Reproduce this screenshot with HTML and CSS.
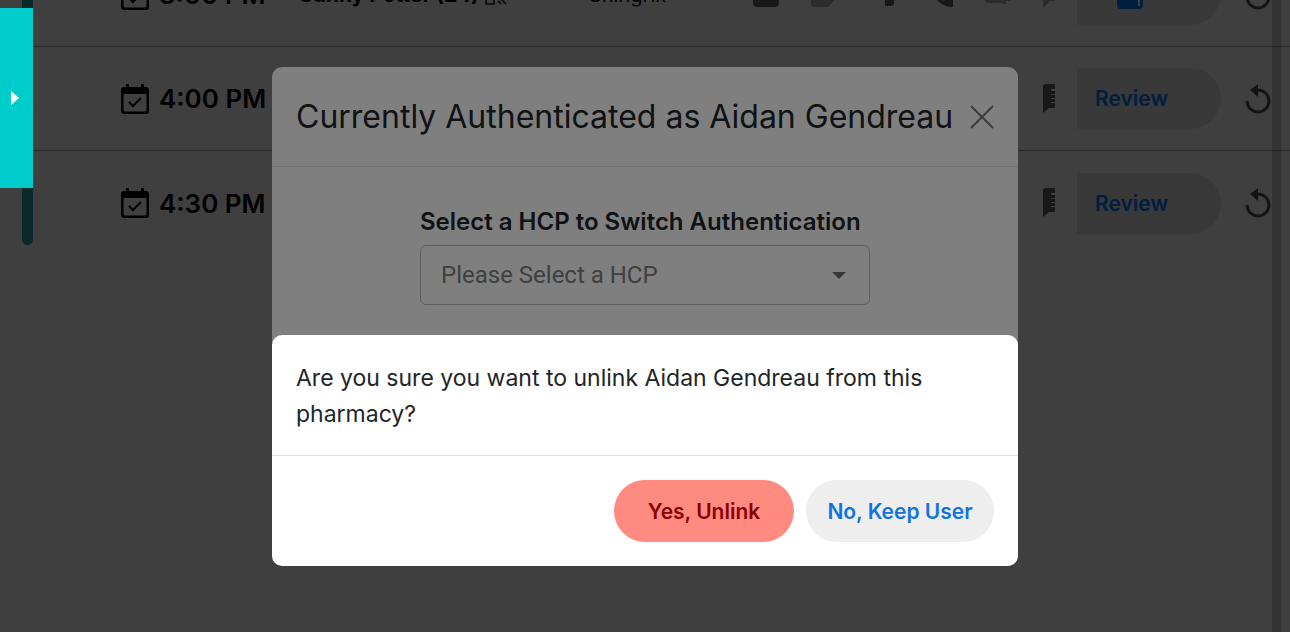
FILE: index.html
```html
<!DOCTYPE html>
<html lang="en">
  <head>
    <meta charset="UTF-8" />
    <meta name="viewport" content="width=device-width, initial-scale=1.0" />
    <title>Schedule</title>
    <link rel="stylesheet" href="styles.css" />
  </head>
  <body>
    <!-- Shared icons -->
    <svg class="sprite" aria-hidden="true">
      <symbol id="icon-calendar" viewBox="0 0 28 30">
        <path fill-rule="evenodd" d="M3 3h2V0h3v3h12V0h3v3h2a3 3 0 0 1 3 3v21a3 3 0 0 1-3 3H3a3 3 0 0 1-3-3V6a3 3 0 0 1 3-3zM2.5 10v16a1.5 1.5 0 0 0 1.5 1.5h20a1.5 1.5 0 0 0 1.5-1.5V10z" />
        <path d="M8 18l4 4 8-8" fill="none" stroke="currentColor" stroke-width="2" />
      </symbol>
      <symbol id="icon-comb" viewBox="0 0 12 30">
        <path d="M2 0h10v5H8v2h4v3H8v1h4v3H8v1h4v3H8v1h4v5H6L0 29V2z" />
      </symbol>
      <symbol id="icon-undo" viewBox="0 0 26 30">
        <path d="M2 17a11 11 0 1 0 11-11" fill="none" stroke="currentColor" stroke-width="3" />
        <path d="M13 0v13L5 6z" />
      </symbol>
    </svg>

    <!-- Schedule -->
    <main class="schedule">
      <div class="row">
        <svg class="icon-calendar"><use href="#icon-calendar" /></svg>
        <span class="time">3:00 PM</span>
        <span class="patient">Sunny Potter (24)</span>
        <svg class="icon-qr" viewBox="0 0 24 20"><path d="M1 1h8v7H1zM14 1h8v7h-8zM1 12h8v7H1zM12 10l9 9M18 10l5 5M13 16l3 3" /></svg>
        <span class="vaccine">Shingrix</span>
        <div class="row-actions">
          <div class="contact-icons">
            <svg viewBox="0 0 26 24"><rect width="26" height="24" rx="4" /></svg>
            <svg class="faded" viewBox="0 0 26 24"><path d="M2 0h24v14l-9 10H3a3 3 0 0 1-3-3V2z" /></svg>
            <svg viewBox="0 0 26 24"><path d="M16 0h9v21l-2 2h-7z" /></svg>
            <svg viewBox="0 0 26 24"><path d="M4 0h5l2 7-3 2q4 7 9 9l3-3 6 2v7h-2Q6 22 4 0z" /></svg>
            <svg class="faded" viewBox="0 0 26 24"><path d="M0 0h26v18h-5v3h-3v-1H2l-2-2z" /></svg>
          </div>
          <svg class="icon-comb faded" viewBox="0 0 12 30"><path d="M0 0h12v21H7L0 28z" /></svg>
          <button class="review-btn" aria-label="Edit">
            <svg class="icon-book" viewBox="0 0 26 28"><path d="M0 0h26v24a4 4 0 0 1-4 4H4a4 4 0 0 1-4-4z" /><path class="book-line" d="M22 6v19" /></svg>
          </button>
          <button class="undo-btn" aria-label="Undo"><svg><use href="#icon-undo" /></svg></button>
        </div>
      </div>
      <div class="row">
        <svg class="icon-calendar"><use href="#icon-calendar" /></svg>
        <span class="time">4:00 PM</span>
        <div class="row-actions">
          <svg class="icon-comb"><use href="#icon-comb" /></svg>
          <button class="review-btn">Review</button>
          <button class="undo-btn" aria-label="Undo"><svg><use href="#icon-undo" /></svg></button>
        </div>
      </div>
      <div class="row">
        <svg class="icon-calendar"><use href="#icon-calendar" /></svg>
        <span class="time">4:30 PM</span>
        <div class="row-actions">
          <svg class="icon-comb"><use href="#icon-comb" /></svg>
          <button class="review-btn">Review</button>
          <button class="undo-btn" aria-label="Undo"><svg><use href="#icon-undo" /></svg></button>
        </div>
      </div>
    </main>
    <div class="progress-bar"></div>
    <div class="scrollbar"></div>

    <!-- Authentication modal -->
    <div class="backdrop">
      <section class="modal" role="dialog" aria-labelledby="authTitle">
        <header class="modal-header">
          <h1 id="authTitle">Currently Authenticated as Aidan Gendreau</h1>
          <button class="close-btn" aria-label="Close">
            <svg viewBox="0 0 24 24"><path d="M1 1l22 22M23 1L1 23" /></svg>
          </button>
        </header>
        <div class="auth-body">
          <div class="form-group">
            <label for="hcp">Select a HCP to Switch Authentication</label>
            <select id="hcp">
              <option>Please Select a HCP</option>
            </select>
            <svg class="caret" viewBox="0 0 14 7"><path d="M0 0h14L7 7z" /></svg>
          </div>
        </div>
      </section>
    </div>

    <!-- Unlink confirmation -->
    <div class="backdrop confirm-backdrop">
      <section class="modal" role="alertdialog" aria-labelledby="confirmText">
        <p class="confirm-text" id="confirmText">
          Are you sure you want to unlink Aidan Gendreau from this pharmacy?
        </p>
        <footer class="modal-footer">
          <button class="btn btn-danger">Yes, Unlink</button>
          <button class="btn btn-light">No, Keep User</button>
        </footer>
      </section>
    </div>

    <button class="drawer-toggle" aria-label="Open drawer">
      <svg viewBox="0 0 8 14"><path d="M0 0l8 7-8 7z" /></svg>
    </button>
  </body>
</html>
```
FILE: styles.css
```css
* {
  box-sizing: border-box;
}
body {
  margin: 0;
  min-height: 100vh;
  overflow: hidden;
  background-color: white;
  color: #212529;
  font-family: Inter, "Liberation Sans", sans-serif;
}
button {
  border: none;
  padding: 0;
  font-family: inherit;
  cursor: pointer;
}
svg {
  display: block;
  flex-shrink: 0;
  fill: currentColor;
}
.sprite {
  position: absolute;
  width: 0;
  height: 0;
}

/* Schedule */
.schedule {
  margin-top: -57px;
  color: black;
}
.row {
  display: flex;
  align-items: center;
  height: 104px;
  padding-left: 121px;
  border-bottom: 1px solid #a8a8a8;
}
.row:last-child {
  border-bottom: none;
}
.icon-calendar {
  width: 28px;
  height: 30px;
  margin-right: 10px;
}
.time {
  width: 140px;
  font-size: 26px;
  font-weight: 600;
}
.patient {
  font-size: 21px;
  font-weight: 700;
}
.icon-qr {
  width: 24px;
  height: 20px;
  margin: 0 80px 0 6px;
  fill: none;
  stroke: #555;
  stroke-width: 2;
}
.vaccine {
  font-size: 20px;
}
.row-actions {
  display: flex;
  align-items: center;
  margin-left: auto;
  padding-right: 19px;
  color: #606060;
}
.contact-icons {
  display: flex;
  align-items: center;
  gap: 32px;
  margin-right: 32px;
}
.contact-icons svg {
  width: 26px;
  height: 24px;
}
.row-actions .faded {
  color: #b0b0b0;
}
.icon-comb {
  width: 12px;
  height: 30px;
  margin-right: 22px;
}
.review-btn {
  width: 144px;
  height: 61px;
  padding-left: 18px;
  border-radius: 0 31px 31px 0;
  background-color: #e4e4e4;
  color: #007aff;
  font-size: 21px;
  font-weight: 600;
  text-align: left;
}
.icon-book {
  width: 26px;
  height: 28px;
  margin-left: 22px;
}
.book-line {
  stroke: white;
  stroke-width: 2;
}
.undo-btn {
  margin-left: 24px;
  background: none;
  color: #505050;
}
.undo-btn svg {
  width: 26px;
  height: 30px;
}
.progress-bar {
  position: absolute;
  top: 0;
  left: 22px;
  width: 11px;
  height: 245px;
  border-radius: 0 0 6px 6px;
  background-color: #28a8a8;
}
.scrollbar {
  position: absolute;
  top: 0;
  bottom: 0;
  right: 9px;
  width: 9px;
  background-color: rgba(0, 0, 0, 0.2);
}
.drawer-toggle {
  position: absolute;
  top: 8px;
  left: 0;
  width: 33px;
  height: 180px;
  padding-left: 11px;
  background-color: #00cccc;
  color: white;
}
.drawer-toggle svg {
  width: 8px;
  height: 14px;
}

/* Modals */
.backdrop {
  position: fixed;
  inset: 0;
  padding: 67px 24px 0;
  background-color: rgba(0, 0, 0, 0.5);
}
.confirm-backdrop {
  padding-top: 335px;
}
.modal {
  max-width: 746px;
  margin: 0 auto;
  border-radius: 10px;
  background-color: white;
}
.modal-header {
  display: flex;
  align-items: center;
  justify-content: space-between;
  height: 100px;
  padding: 0 24px;
  border-bottom: 1px solid #e0e2e4;
}
h1 {
  margin: 0;
  font-size: 32px;
  font-weight: 400;
  white-space: nowrap;
}
.close-btn {
  background: none;
  color: #787878;
}
.close-btn svg {
  width: 24px;
  height: 24px;
  stroke: currentColor;
  stroke-width: 2;
}
.auth-body {
  padding: 37px 24px 64px;
}
.form-group {
  position: relative;
  width: 450px;
  max-width: 100%;
  margin: 0 auto;
}
label {
  display: block;
  margin-bottom: 5px;
  font-size: 24px;
  font-weight: 600;
  line-height: 36px;
}
select {
  appearance: none;
  width: 100%;
  height: 60px;
  padding: 0 20px;
  border: 1px solid #b8b8b8;
  border-radius: 6px;
  background-color: white;
  color: #808080;
  font-family: Roboto, sans-serif;
  font-size: 24px;
}
.caret {
  position: absolute;
  right: 24px;
  bottom: 26px;
  width: 14px;
  height: 7px;
  color: #707070;
  pointer-events: none;
}
.confirm-text {
  margin: 0;
  padding: 25px 24px 23px;
  font-size: 23px;
  line-height: 36px;
}
.modal-footer {
  display: flex;
  justify-content: flex-end;
  gap: 12px;
  padding: 24px;
  border-top: 1px solid #dee2e6;
}
.btn {
  height: 62px;
  border-radius: 31px;
  font-size: 21px;
  font-weight: 600;
}
.btn-danger {
  width: 180px;
  background-color: #ff8a80;
  color: #8b0000;
}
.btn-light {
  width: 188px;
  background-color: #eeeeee;
  color: #0f74e0;
}
```
